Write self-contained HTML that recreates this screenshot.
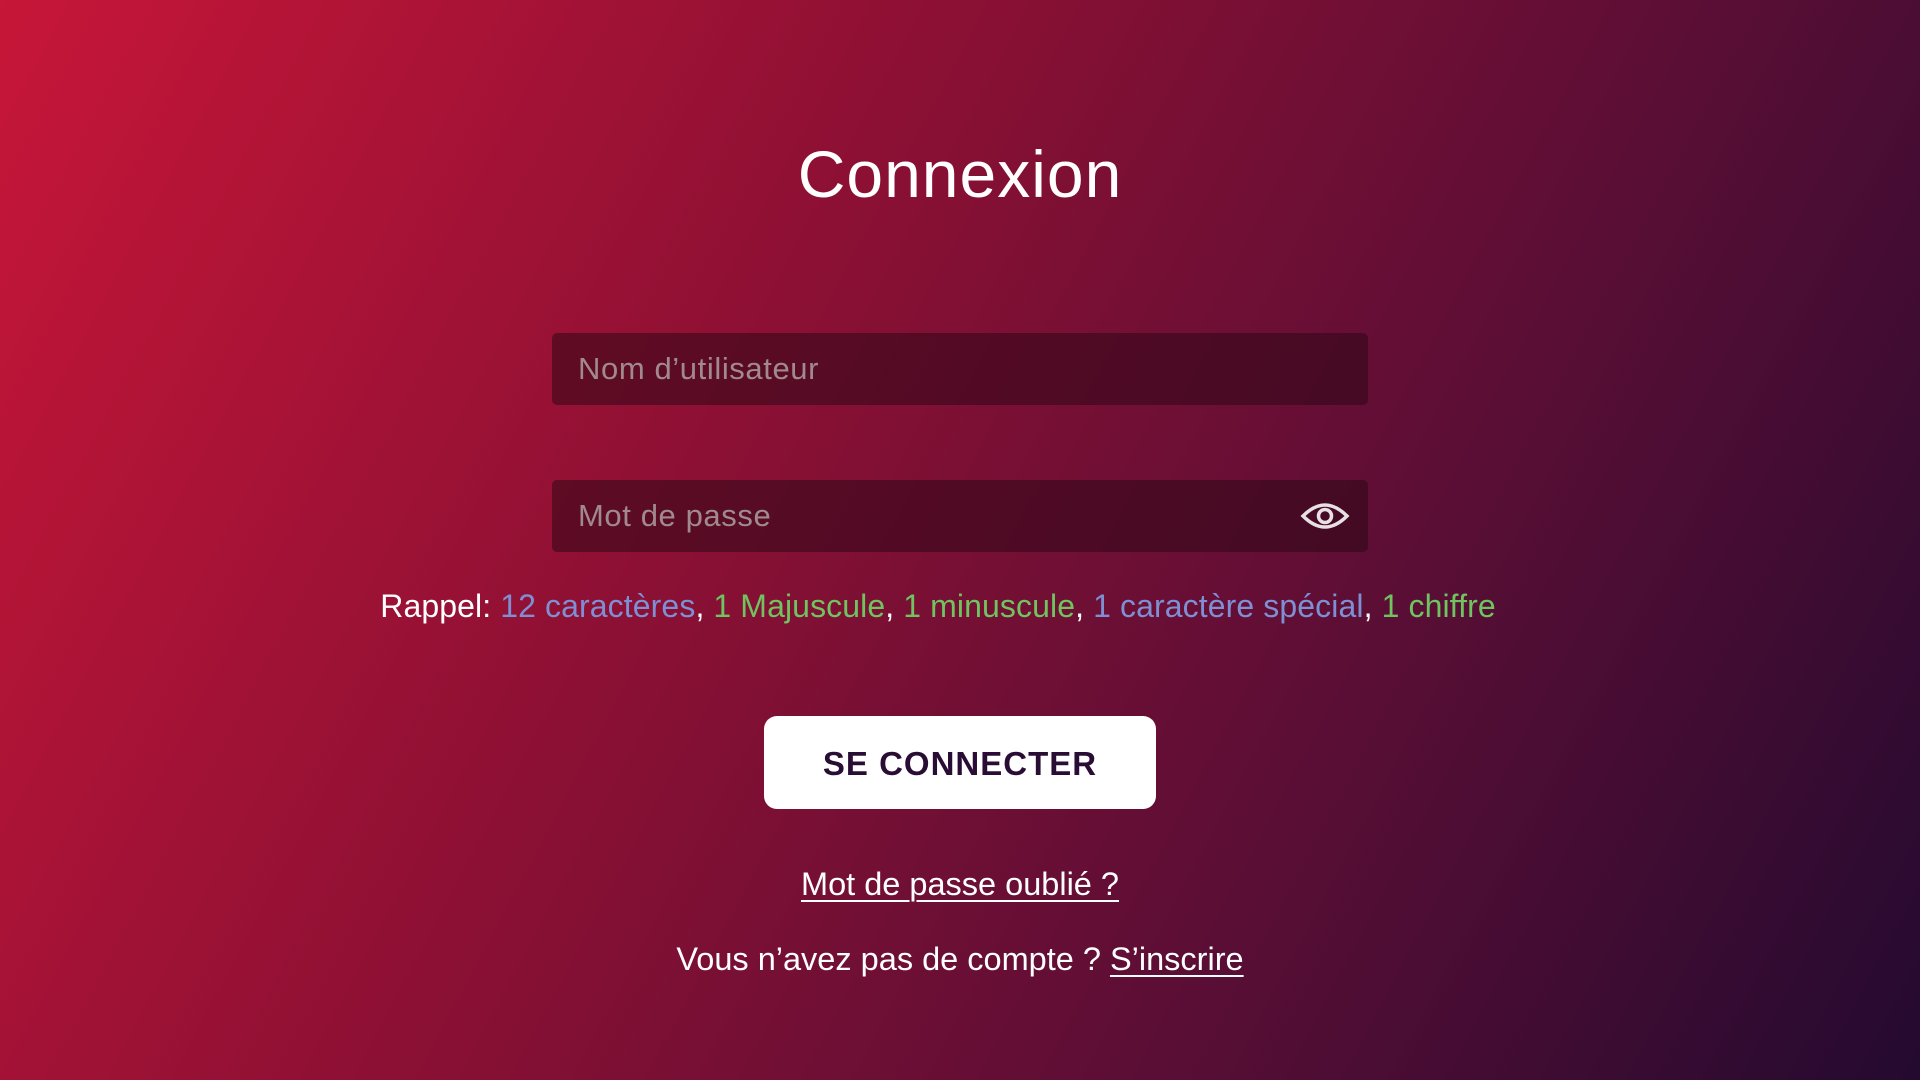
<!DOCTYPE html>
<html><head><meta charset="utf-8"><style>
html,body{margin:0;padding:0;width:1920px;height:1080px;overflow:hidden}
body{background:linear-gradient(118deg,#c71638 0%,#8c1034 38%,#5c0e35 68%,#240a30 100%);font-family:"Liberation Sans",sans-serif;color:#fff;position:relative}
h1{position:absolute;top:134px;left:0;width:1920px;text-align:center;margin:0;font-size:66px;font-weight:normal;line-height:80px;letter-spacing:1px}
.inp{position:absolute;left:552px;width:816px;height:72px;background:rgba(40,5,20,0.5);border-radius:5px;box-sizing:border-box;padding-left:26px;font-size:31px;letter-spacing:0.6px;line-height:72px;color:#a08a90}
.rap{position:absolute;top:586px;left:-22px;width:1920px;text-align:center;font-size:32px;line-height:40px;letter-spacing:0.1px}
.b{color:#7e8fd4}.g{color:#6fc460}
.btn{position:absolute;left:764px;top:716px;width:392px;height:93px;background:#fff;border-radius:13px;color:#2a0d35;font-weight:bold;font-size:33px;line-height:95px;text-align:center;letter-spacing:1px}
.l{position:absolute;left:0;width:1920px;text-align:center;font-size:32.5px;line-height:40px}
u{text-decoration-thickness:2px;text-underline-offset:5px}
</style></head><body>
<h1>Connexion</h1>
<div class="inp" style="top:333px">Nom d’utilisateur</div>
<div class="inp" style="top:480px">Mot de passe
<svg style="position:absolute;right:18px;top:20px" width="50" height="32" viewBox="0 0 50 32"><path d="M3 16 Q25 -6 47 16 Q25 38 3 16Z" fill="none" stroke="#e8e0e2" stroke-width="3.5"/><circle cx="25" cy="16" r="6.5" fill="none" stroke="#e8e0e2" stroke-width="3.5"/></svg></div>
<div class="rap">Rappel: <span class="b">12 caractères</span>, <span class="g">1 Majuscule</span>, <span class="g">1 minuscule</span>, <span class="b">1 caractère spécial</span>, <span class="g">1 chiffre</span></div>
<div class="btn">SE CONNECTER</div>
<div class="l" style="top:864px"><u>Mot de passe oublié ?</u></div>
<div class="l" style="top:939px">Vous n’avez pas de compte ? <u>S’inscrire</u></div>
</body></html>
